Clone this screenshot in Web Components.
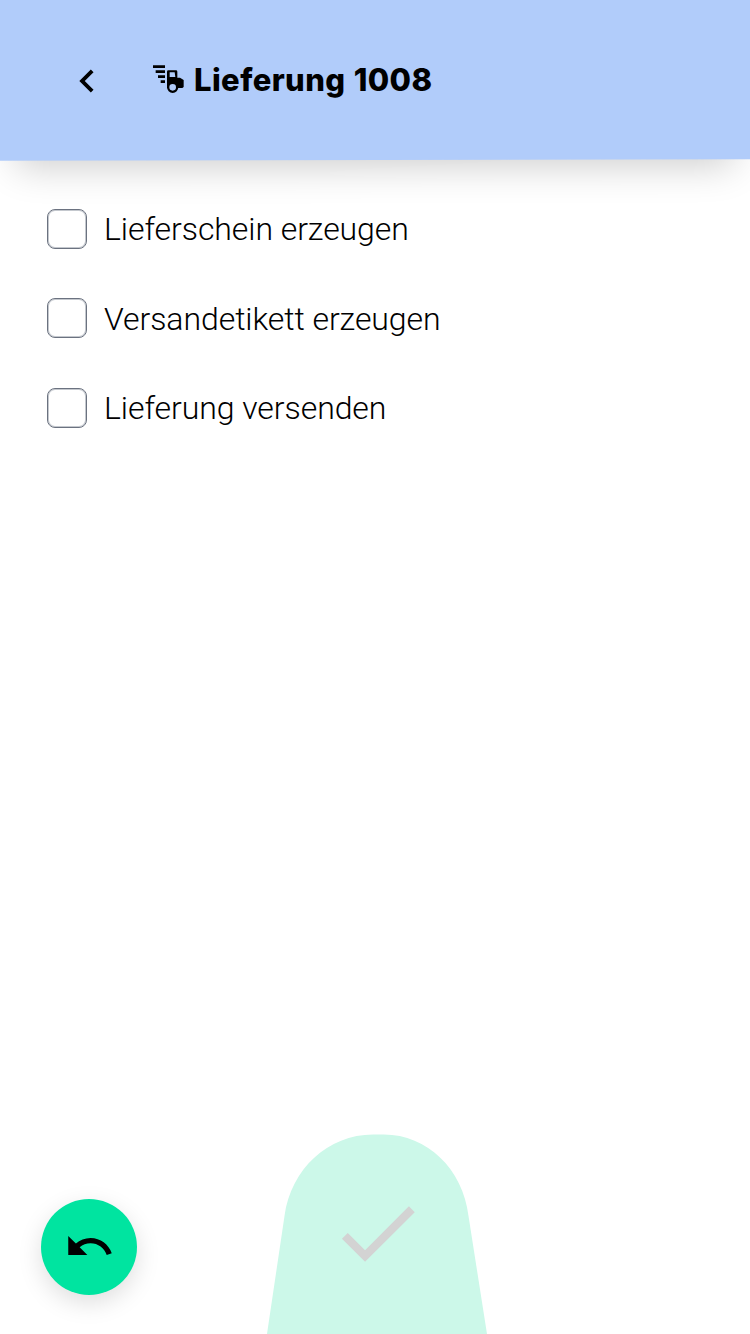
<!DOCTYPE html>
<html lang="de">
<head>
  <meta charset="UTF-8">
  <title>Lieferung 1008</title>
  <style>
    html, body {
      height: 100%;
      margin: 0;
    }

    body {
      background: #ffffff;
      color: #000000;
      font-family: Roboto, "Liberation Sans", sans-serif;
      overflow: hidden;
    }
  </style>
</head>
<body>
  <delivery-page>
    <page-header slot="header">Lieferung 1008</page-header>
    <task-item>Lieferschein erzeugen</task-item>
    <task-item>Versandetikett erzeugen</task-item>
    <task-item>Lieferung versenden</task-item>
    <undo-button slot="footer"></undo-button>
    <confirm-button slot="footer"></confirm-button>
  </delivery-page>

  <script>
    class DeliveryPage extends HTMLElement {
      constructor () {
        super()
        this.shadow = this.attachShadow({ mode: 'open' })
      }

      connectedCallback () {
        this.render()
      }

      render () {
        this.shadow.innerHTML =
        /*html*/`
          <style>
            :host {
              display: flex;
              flex-direction: column;
              height: 100vh;
            }

            main {
              display: flex;
              flex: 1;
              flex-direction: column;
              gap: 49.5px;
              padding: 49px 47px 0;
            }

            footer {
              align-items: flex-end;
              display: grid;
              grid-template-columns: 267px 220px 1fr;
              height: 200px;
            }
          </style>

          <slot name="header"></slot>
          <main><slot></slot></main>
          <footer><slot name="footer"></slot></footer>
        `
      }
    }

    customElements.define('delivery-page', DeliveryPage)

    class PageHeader extends HTMLElement {
      constructor () {
        super()
        this.shadow = this.attachShadow({ mode: 'open' })
      }

      connectedCallback () {
        this.render()
      }

      render () {
        this.shadow.innerHTML =
        /*html*/`
          <style>
            :host {
              align-items: center;
              box-sizing: border-box;
              display: flex;
              flex: none;
              height: 160px;
              isolation: isolate;
              padding: 1px 0 0 64px;
              position: relative;
            }

            /* slightly tilted lower edge */
            :host::before {
              background: #b1ccfa;
              box-shadow: 0 22px 38px -16px rgba(0, 0, 0, 0.2);
              content: "";
              inset: -10px 0 0;
              position: absolute;
              transform: skewY(-0.13deg);
              z-index: -1;
            }

            .back {
              height: 46px;
              width: 46px;
            }

            .truck {
              height: 30px;
              margin: -1px 10px 0 42px;
              width: 32px;
            }

            h1 {
              font-family: Inter, "Liberation Sans", sans-serif;
              font-size: 31px;
              font-weight: 800;
              letter-spacing: 0.4px;
              line-height: 40px;
              margin: -2px 0 0;
              white-space: nowrap;
              word-spacing: 1px;
            }
          </style>

          <svg class="back" viewBox="0 0 24 24"><path d="M15.41 7.41 14 6l-6 6 6 6 1.41-1.41L10.83 12z"/></svg>
          <svg class="truck" viewBox="36 45 96 90">
            <path d="M39 46h36v8H39zM47 61h28v8H47zM54 76h21v8H54zM62 91h13v8H62z"/>
            <path fill-rule="evenodd" d="M85 61h23q4 0 4 4v18h8l11 7v21l-4 3H81V65q0-4 4-4zM89 67v14h17l-2-14z"/>
            <circle cx="98" cy="112" r="13.5" fill="#b1ccfa" stroke="#000" stroke-width="7"/>
          </svg>
          <h1><slot></slot></h1>
        `
      }
    }

    customElements.define('page-header', PageHeader)

    class TaskItem extends HTMLElement {
      constructor () {
        super()
        this.shadow = this.attachShadow({ mode: 'open' })
      }

      connectedCallback () {
        this.render()
      }

      render () {
        this.shadow.innerHTML =
        /*html*/`
          <style>
            :host {
              display: block;
            }

            label {
              align-items: center;
              display: flex;
              gap: 17px;
              height: 40px;
            }

            input {
              appearance: none;
              background: #ffffff;
              border: 1px solid #6b7280;
              border-radius: 8px;
              box-shadow: inset 0 0 0 1px #c4c8ce;
              box-sizing: border-box;
              flex: none;
              height: 40px;
              margin: -1px 0 0;
              width: 40px;
            }

            span {
              font-size: 32px;
              font-weight: 300;
              letter-spacing: -0.07px;
              line-height: 40px;
            }
          </style>

          <label>
            <input type="checkbox">
            <span><slot></slot></span>
          </label>
        `
      }
    }

    customElements.define('task-item', TaskItem)

    class UndoButton extends HTMLElement {
      constructor () {
        super()
        this.shadow = this.attachShadow({ mode: 'open' })
      }

      connectedCallback () {
        this.render()
      }

      render () {
        this.shadow.innerHTML =
        /*html*/`
          <style>
            :host {
              display: block;
              padding: 0 0 39px 41px;
            }

            button {
              align-items: center;
              background: #00e4a0;
              border: none;
              border-radius: 50%;
              box-shadow: 0 8px 24px rgba(0, 0, 0, 0.13);
              color: #000000;
              display: flex;
              height: 96px;
              justify-content: center;
              padding: 0;
              width: 96px;
            }

            svg {
              height: 51px;
              margin-top: -1px;
              width: 51px;
            }
          </style>

          <button aria-label="Rückgängig">
            <svg viewBox="0 0 24 24"><path d="M12.5 8c-2.65 0-5.05.99-6.9 2.6L2 7v9h9l-3.62-3.62c1.39-1.16 3.16-1.88 5.12-1.88 3.54 0 6.55 2.31 7.6 5.5l2.37-.78C21.08 11.03 17.15 8 12.5 8z"/></svg>
          </button>
        `
      }
    }

    customElements.define('undo-button', UndoButton)

    class ConfirmButton extends HTMLElement {
      constructor () {
        super()
        this.shadow = this.attachShadow({ mode: 'open' })
      }

      connectedCallback () {
        this.render()
      }

      render () {
        this.shadow.innerHTML =
        /*html*/`
          <style>
            :host {
              display: block;
              height: 200px;
              width: 220px;
            }

            button {
              background: none;
              border: none;
              display: block;
              padding: 0;
            }

            svg {
              display: block;
            }

            .shape {
              fill: #ccf8e9;
            }

            .check {
              fill: #d3d3d3;
            }
          </style>

          <button aria-label="Bestätigen" disabled>
            <svg width="220" height="200" viewBox="0 0 220 200">
              <path class="shape" d="M0 200 17.5 82C24 35 61 .5 106 .5h11C160 .5 196 35 201.500 82L220 200z"/>
              <path class="check" transform="translate(60.800 49.200) scale(4.140)" d="M9 16.17 4.830 12l-1.420 1.410L9 19 21 7l-1.410-1.410z"/>
            </svg>
          </button>
        `
      }
    }

    customElements.define('confirm-button', ConfirmButton)
  </script>
</body>
</html>
